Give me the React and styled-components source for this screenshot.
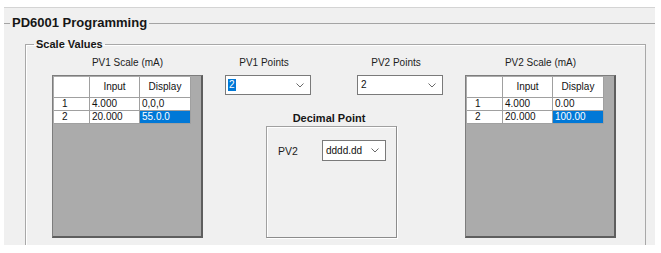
import React from 'react';
import styled, { createGlobalStyle } from 'styled-components';

const GlobalStyle = createGlobalStyle`
  html, body {
    margin: 0;
    padding: 0;
    background: #fff;
  }
  body {
    font-family: "Liberation Sans", Arial, sans-serif;
    color: #000;
  }
`;

const Window = styled.div`
  margin: 7px 0 0 4px;
  width: 651px;
  height: 238px;
  box-sizing: border-box;
  background: #f0f0f0;
  border-top: 1px solid #d4d4d4;
  padding-top: 7px;
  overflow: hidden;
`;

const OuterGroup = styled.fieldset`
  margin: 0;
  padding: 0;
  min-width: 0;
  border: none;
  border-top: 1px solid #a4a4a4;
`;

const InnerGroup = styled.fieldset`
  margin: 6px 0 0 21px;
  padding: 0;
  min-width: 0;
  width: 621px;
  height: 230px;
  box-sizing: border-box;
  border: 1px solid #a8a8a8;
  box-shadow: inset 1px 1px 0 #fff;
`;

const Legend = styled.legend`
  margin-left: ${p => p.$offset}px;
  padding: 0 2px;
  font-weight: bold;
  font-size: ${p => p.$size}px;
  line-height: ${p => p.$size + 3}px;
  color: #161616;
`;

const Columns = styled.div`
  display: flex;
  gap: 22px;
  padding: 6px 0 0 26px;
`;

const ScaleColumn = styled.div`
  width: 151px;
  display: flex;
  flex-direction: column;
`;

const Caption = styled.div`
  font-size: 10px;
  line-height: 12px;
  text-align: center;
  color: #1c1c1c;
  padding-right: ${p => p.$shift || 0}px;
`;

const Grid = styled.div`
  margin-top: 6px;
  width: 151px;
  height: 163px;
  box-sizing: border-box;
  background: #ababab;
  border: 1px solid #7d7d7d;
  border-right: 2px solid #5e5e5e;
  border-bottom: 2px solid #5e5e5e;
  padding: 1px 0 0 1px;
`;

const Table = styled.div`
  display: grid;
  grid-template-columns: 36px 50px 51px;
  grid-template-rows: 21px 13px 13px;
`;

const Cell = styled.div`
  box-sizing: border-box;
  display: flex;
  align-items: center;
  justify-content: ${p => (p.$center ? 'center' : 'flex-start')};
  padding-left: ${p => p.$pad ?? 2}px;
  background: ${p => (p.$selected ? '#0078d7' : '#fff')};
  color: ${p => (p.$selected ? '#fff' : '#111')};
  border-right: 1px solid #a0a0a0;
  border-bottom: 1px solid #a0a0a0;
  font-size: 10px;
  line-height: 12px;
  white-space: nowrap;
`;

const MiddleColumn = styled.div`
  width: 218px;
  display: flex;
  flex-direction: column;
`;

const PointsRow = styled.div`
  display: flex;
  justify-content: space-between;
`;

const PointsField = styled.div`
  width: 86px;
  display: flex;
  flex-direction: column;
`;

const Combo = styled.div`
  margin-top: ${p => p.$top || 0}px;
  width: ${p => p.$width}px;
  height: ${p => p.$height}px;
  box-sizing: border-box;
  background: #fff;
  border: 1px solid #7a7a7a;
  display: flex;
  align-items: center;
  justify-content: space-between;
  padding: 0 6px 0 2px;
  font-size: 10px;
  color: #111;
`;

const ComboText = styled.span`
  line-height: 12px;
  padding: 0 1px;
  background: ${p => (p.$selected ? '#0078d7' : 'transparent')};
  color: ${p => (p.$selected ? '#fff' : '#111')};
`;

const DecimalTitle = styled.div`
  margin-top: 16px;
  padding-right: 10px;
  font-size: 11px;
  line-height: 14px;
  font-weight: bold;
  text-align: center;
  color: #161616;
`;

const DecimalBox = styled.div`
  margin: 1px 0 0 41px;
  width: 131px;
  height: 112px;
  box-sizing: border-box;
  border: 1px solid #a0a0a0;
  border-right-color: #8c8c8c;
  border-bottom-color: #8c8c8c;
  box-shadow: inset 1px 1px 0 #fff, 1px 1px 0 #fff;
  display: flex;
  align-items: center;
  align-self: flex-start;
  align-content: flex-start;
  flex-wrap: wrap;
  padding: 13px 0 0 11px;
`;

const FieldLabel = styled.span`
  width: 44px;
  font-size: 10.5px;
  color: #1c1c1c;
`;

const Chevron = () => (
  <svg width="8" height="5" viewBox="0 0 8 5">
    <path d="M0.5 0.5 L4 4 L7.5 0.5" fill="none" stroke="#6a6a6a" strokeWidth="1" />
  </svg>
);

function ScaleGrid({ title, rows }) {
  return (
    <ScaleColumn>
      <Caption>{title}</Caption>
      <Grid>
        <Table>
          <Cell />
          <Cell $center $pad={0}>Input</Cell>
          <Cell $center $pad={0}>Display</Cell>
          {rows.map((r, i) => (
            <React.Fragment key={i}>
              <Cell $pad={8}>{i + 1}</Cell>
              <Cell>{r.input}</Cell>
              <Cell $selected={r.selected}>{r.display}</Cell>
            </React.Fragment>
          ))}
        </Table>
      </Grid>
    </ScaleColumn>
  );
}

export default function App() {
  return (
    <>
      <GlobalStyle />
      <Window>
        <OuterGroup>
          <Legend $size={13} $offset={6}>PD6001 Programming</Legend>
          <InnerGroup>
            <Legend $size={11} $offset={8}>Scale Values</Legend>
            <Columns>
              <ScaleGrid
                title="PV1 Scale (mA)"
                rows={[
                  { input: '4.000', display: '0,0,0' },
                  { input: '20.000', display: '55.0.0', selected: true },
                ]}
              />
              <MiddleColumn>
                <PointsRow>
                  <PointsField>
                    <Caption $shift={8}>PV1 Points</Caption>
                    <Combo $top={6} $width={86} $height={20}>
                      <ComboText $selected>2</ComboText>
                      <Chevron />
                    </Combo>
                  </PointsField>
                  <PointsField>
                    <Caption $shift={8}>PV2 Points</Caption>
                    <Combo $top={6} $width={86} $height={20}>
                      <ComboText>2</ComboText>
                      <Chevron />
                    </Combo>
                  </PointsField>
                </PointsRow>
                <DecimalTitle>Decimal Point</DecimalTitle>
                <DecimalBox>
                  <FieldLabel>PV2</FieldLabel>
                  <Combo $width={64} $height={21}>
                    <ComboText>dddd.dd</ComboText>
                    <Chevron />
                  </Combo>
                </DecimalBox>
              </MiddleColumn>
              <ScaleGrid
                title="PV2 Scale (mA)"
                rows={[
                  { input: '4.000', display: '0.00' },
                  { input: '20.000', display: '100.00', selected: true },
                ]}
              />
            </Columns>
          </InnerGroup>
        </OuterGroup>
      </Window>
    </>
  );
}
